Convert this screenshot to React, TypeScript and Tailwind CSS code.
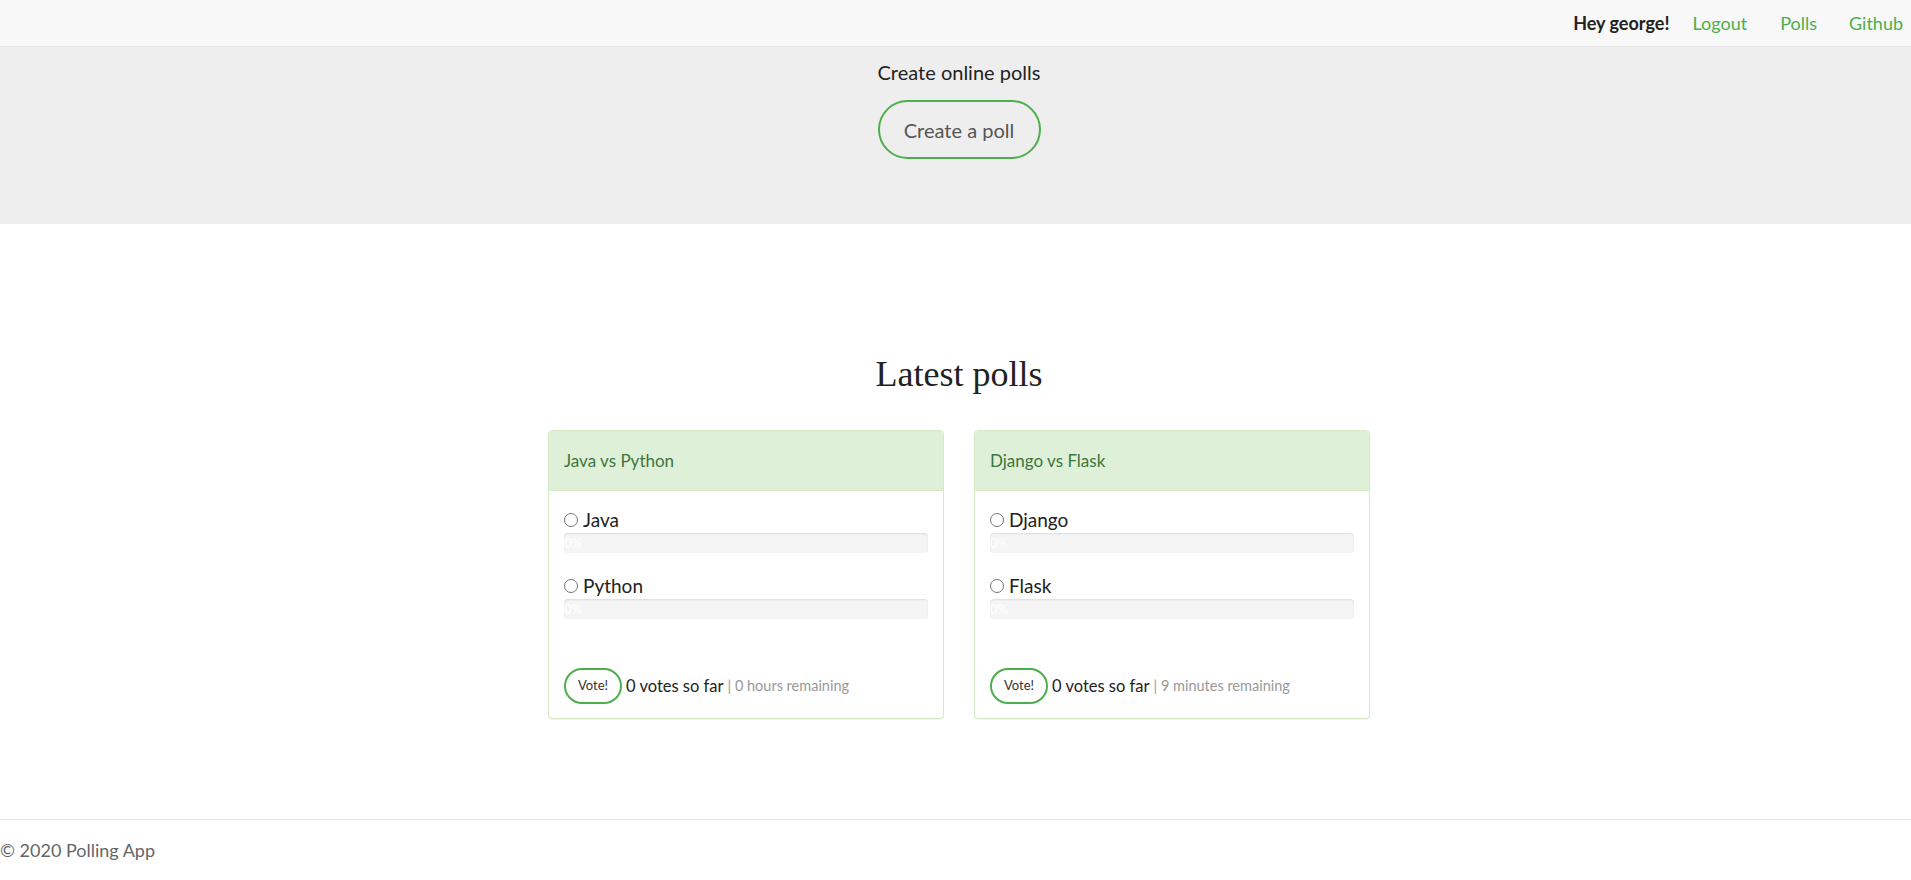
import React from 'react';

type Poll = {
    id: number;
    title: string;
    choices: string[];
    remaining: string;
};

const polls: Poll[] = [
    { id: 1, title: 'Java vs Python', choices: ['Java', 'Python'], remaining: '0 hours remaining' },
    { id: 2, title: 'Django vs Flask', choices: ['Django', 'Flask'], remaining: '9 minutes remaining' },
];

function PollCard({ poll }: { poll: Poll }) {
    return (
        <div className="w-[396px] h-[289px] border border-[#d6e9c6] rounded-[4px] bg-white flex flex-col shadow-[0_1px_1px_rgba(0,0,0,0.05)]">
            <div className="h-[60px] bg-[#dff0d8] border-b border-[#d6e9c6] rounded-t-[3px] px-[15px] flex items-center text-[17px] text-[#3c763d]">
                {poll.title}
            </div>
            <div className="flex-1 px-[15px] pt-[17px] pb-[14px] flex flex-col">
                {poll.choices.map((c) => (
                    <div key={c} className="mb-[21px]">
                        <label className="flex items-center gap-[5px] text-[19px] leading-[24px] text-[#222]">
                            <input
                                type="radio"
                                name={`poll-${poll.id}`}
                                className="appearance-none w-[14px] h-[14px] m-0 rounded-full border border-[#767676] bg-white"
                            />
                            {c}
                        </label>
                        <div className="mt-[1px] h-[20px] rounded-[4px] bg-[#f5f5f5] shadow-[inset_0_1px_2px_rgba(0,0,0,0.1)] overflow-hidden">
                            <div className="h-full w-0 text-[13px] leading-[20px] text-white whitespace-nowrap">0%</div>
                        </div>
                    </div>
                ))}
                <div className="mt-auto flex items-center gap-[4px]">
                    <button className="h-[36px] w-[58px] rounded-full border-2 border-[#4cae4c] text-[13px] text-[#333] bg-white">
                        Vote!
                    </button>
                    <span className="text-[16.5px] text-[#222]">0 votes so far</span>
                    <span className="text-[14.5px] text-[#999]">| {poll.remaining}</span>
                </div>
            </div>
        </div>
    );
}

export default function App() {
    return (
        <div className="min-h-[880px] flex flex-col bg-white font-['Lato',sans-serif] text-[#333]">
            <nav className="h-[47px] bg-[#f8f8f8] border-b border-[#e7e7e7] flex items-center justify-end pr-[8px] text-[18px]">
                <span className="font-bold text-[#222] mr-[23px]">Hey george!</span>
                <a className="text-[#4cae4c] mr-[33px]">Logout</a>
                <a className="text-[#4cae4c] mr-[32px]">Polls</a>
                <a className="text-[#4cae4c]">Github</a>
            </nav>

            <header className="h-[177px] bg-[#eee] flex flex-col items-center pt-[12px] pl-[7px]">
                <p className="text-[20px] leading-[26px] text-[#222]">Create online polls</p>
                <button className="mt-[15px] h-[59px] w-[163px] rounded-full border-2 border-[#4cae4c] text-[20px] text-[#555] bg-transparent">
                    Create a poll
                </button>
            </header>

            <main className="flex-1 flex flex-col items-center pt-[126px] pl-[7px]">
                <h2 className="font-['Liberation_Serif',serif] text-[36px] leading-[48px] text-[#222]">Latest polls</h2>
                <div className="mt-[32px] flex gap-[30px]">
                    {polls.map((p) => (
                        <PollCard key={p.id} poll={p} />
                    ))}
                </div>
            </main>

            <footer className="border-t border-[#e5e5e5] h-[61px] flex items-center text-[18px] text-[#666]">
                © 2020 Polling App
            </footer>
        </div>
    );
}
